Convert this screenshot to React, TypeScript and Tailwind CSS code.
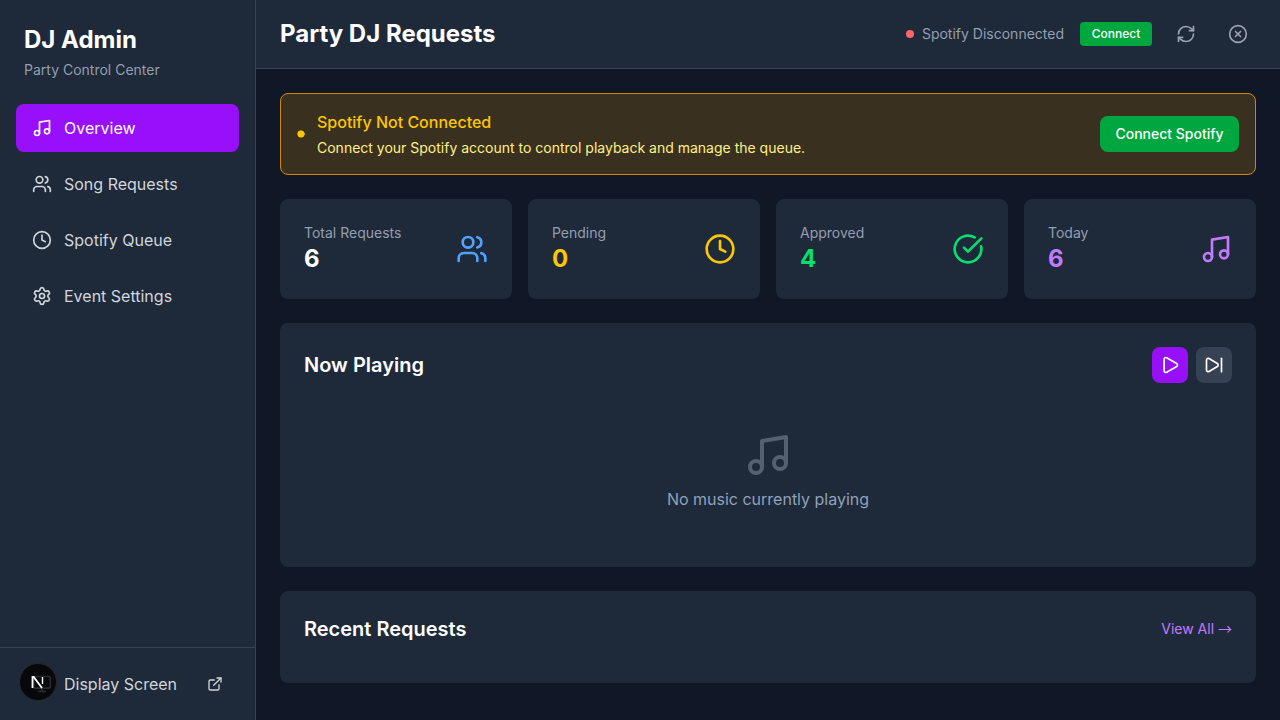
import { CheckCircle, Circle, Clock, ExternalLink, Monitor, Music, Play, RefreshCw, Settings, SkipForward, Users, XCircle } from "lucide-react";

const NAV_ITEMS = [
  { label: "Overview", icon: Music, active: true },
  { label: "Song Requests", icon: Users, active: false },
  { label: "Spotify Queue", icon: Clock, active: false },
  { label: "Event Settings", icon: Settings, active: false },
];

const STATS = [
  { label: "Total Requests", value: "6", color: "text-white", icon: Users, iconColor: "text-blue-400" },
  { label: "Pending", value: "0", color: "text-yellow-400", icon: Clock, iconColor: "text-yellow-400" },
  { label: "Approved", value: "4", color: "text-green-400", icon: CheckCircle, iconColor: "text-green-400" },
  { label: "Today", value: "6", color: "text-purple-400", icon: Music, iconColor: "text-purple-400" },
];

function Sidebar() {
  return (
    <aside className="flex h-full w-64 shrink-0 flex-col border-r border-gray-700 bg-gray-800">
      <div className="p-6">
        <h1 className="text-2xl font-bold text-white">DJ Admin</h1>
        <p className="mt-1 text-sm text-[#939fb1]">Party Control Center</p>
      </div>
      <nav className="flex flex-1 flex-col gap-2 px-4">
        {NAV_ITEMS.map((item) => (
          <a
            key={item.label}
            className={
              item.active
                ? "flex h-12 items-center gap-3 rounded-lg bg-purple-600 px-4 text-white"
                : "flex h-12 items-center gap-3 rounded-lg px-4 text-gray-300"
            }
          >
            <item.icon className="h-5 w-5" />
            {item.label}
          </a>
        ))}
      </nav>
      <div className="border-t border-gray-700 px-4 py-3">
        <a className="flex h-12 items-center gap-3 rounded-lg px-4 text-gray-300">
          <Monitor className="h-5 w-5" />
          <span className="flex-1">Display Screen</span>
          <ExternalLink className="h-4 w-4" />
        </a>
      </div>
    </aside>
  );
}

function Header() {
  return (
    <header className="flex h-[69px] shrink-0 items-center justify-between border-b border-gray-700 bg-gray-800 px-6">
      <h2 className="text-2xl font-bold text-white">Party DJ Requests</h2>
      <div className="flex items-center gap-4">
        <div className="flex items-center gap-2">
          <span className="h-2 w-2 rounded-full bg-red-400" />
          <span className="text-sm text-[#939fb1]">Spotify Disconnected</span>
        </div>
        <button className="h-6 w-[72px] rounded bg-green-600 text-xs font-medium text-white">Connect</button>
        <button className="p-2 text-gray-400">
          <RefreshCw className="h-5 w-5" />
        </button>
        <button className="p-2 text-gray-400">
          <XCircle className="h-5 w-5" />
        </button>
      </div>
    </header>
  );
}

export default function App() {
  return (
    <div className="relative flex h-screen overflow-hidden bg-gray-900 font-['Inter',sans-serif]">
      <Sidebar />
      <div className="flex min-w-0 flex-1 flex-col">
        <Header />
        <main className="flex flex-1 flex-col gap-6 overflow-hidden p-6">
          <div className="flex h-[82px] shrink-0 items-center justify-between rounded-lg border border-yellow-600 bg-[#3a3020] px-4">
            <div className="flex items-center gap-3">
              <Circle className="h-2 w-2 fill-yellow-400 text-yellow-400" />
              <div>
                <h3 className="mb-1 font-medium text-yellow-400">Spotify Not Connected</h3>
                <p className="text-sm text-yellow-200">Connect your Spotify account to control playback and manage the queue.</p>
              </div>
            </div>
            <button className="h-9 w-[139px] rounded-lg bg-green-600 text-sm font-medium text-white">Connect Spotify</button>
          </div>

          <div className="grid shrink-0 grid-cols-4 gap-4">
            {STATS.map((stat) => (
              <div key={stat.label} className="flex h-[100px] items-center justify-between rounded-lg bg-gray-800 px-6">
                <div>
                  <p className="text-sm text-[#939fb1]">{stat.label}</p>
                  <p className={`text-2xl font-bold leading-8 ${stat.color}`}>{stat.value}</p>
                </div>
                <stat.icon className={`h-8 w-8 ${stat.iconColor}`} />
              </div>
            ))}
          </div>

          <section className="h-[244px] shrink-0 rounded-lg bg-gray-800 p-6">
            <div className="flex items-center justify-between">
              <h3 className="text-xl font-semibold text-white">Now Playing</h3>
              <div className="flex gap-2">
                <button className="flex h-9 w-9 items-center justify-center rounded-lg bg-purple-600 text-white">
                  <Play className="h-5 w-5" />
                </button>
                <button className="flex h-9 w-9 items-center justify-center rounded-lg bg-gray-700 text-white">
                  <SkipForward className="h-5 w-5" />
                </button>
              </div>
            </div>
            <div className="mt-12 flex flex-col items-center">
              <Music className="mb-2 h-12 w-12 text-[#566170]" />
              <p className="text-slate-400">No music currently playing</p>
            </div>
          </section>

          <section className="flex h-[92px] shrink-0 items-start justify-between rounded-lg bg-gray-800 p-6">
            <h3 className="text-xl font-semibold text-white">Recent Requests</h3>
            <a className="mt-[3px] text-sm text-purple-400">
              View All <span className="font-['Noto_Sans_CJK_SC',sans-serif]">→</span>
            </a>
          </section>
        </main>
      </div>

      {/* dev indicator sits over the sidebar footer */}
      <div className="absolute bottom-[19px] left-[19px] flex h-[38px] w-[38px] items-center justify-center rounded-full border border-[#262626] bg-black/80">
        <svg width="18" height="18" viewBox="0 0 18 18" fill="none">
          <path d="M3.5 15V4h1.2L13 15" stroke="white" strokeWidth="1.8" />
          <path d="M13.5 4v7" stroke="white" strokeWidth="1.4" />
        </svg>
      </div>
    </div>
  );
}
